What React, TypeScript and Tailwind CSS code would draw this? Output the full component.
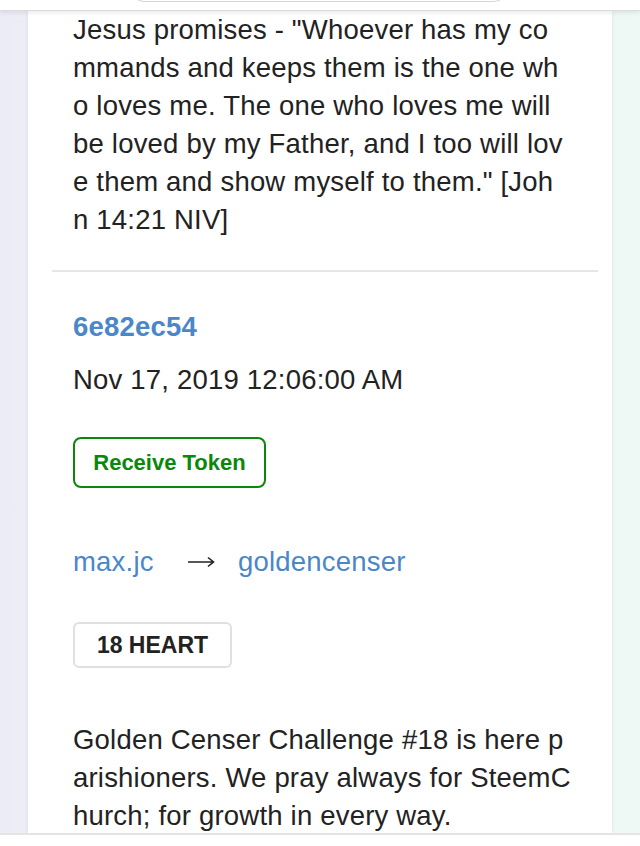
const verse = [
  'Jesus promises - "Whoever has my co',
  "mmands and keeps them is the one wh",
  "o loves me. The one who loves me will",
  "be loved by my Father, and I too will lov",
  'e them and show myself to them." [Joh',
  "n 14:21 NIV]",
];

const note = [
  "Golden Censer Challenge #18 is here p",
  "arishioners. We pray always for SteemC",
  "hurch; for growth in every way.",
];

export default function App() {
  return (
    <div
      className="h-[846px] w-[640px] overflow-hidden flex flex-col bg-white text-[#222]"
      style={{ fontFamily: '"Liberation Sans", Arial, Helvetica, sans-serif' }}
    >
      {/* header strip */}
      <div className="relative h-[11px] shrink-0 bg-white border-b border-[#dcdcdc] shadow-[0_2px_4px_rgba(0,0,0,0.08)] z-10">
        <div className="absolute left-[130px] right-[132px] top-[-20px] h-[22px] rounded-b-[14px] border border-[#d6d6d6] bg-white" />
      </div>

      {/* body */}
      <div className="flex-1 min-h-0 flex bg-gradient-to-r from-[#ececf6] via-[#f1f3f7] to-[#eef8f5]">
        <div className="w-[28px] shrink-0" />
        <div className="flex-1 bg-white shadow-[0_0_4px_rgba(0,0,0,0.08)] overflow-hidden">
          <div className="text-[27.5px] leading-[38px] tracking-[0.2px]">
            <p className="pl-[45px]">
              {verse.map((l) => (
                <span key={l} className="block whitespace-pre">{l}</span>
              ))}
            </p>

            <div className="ml-[24px] mr-[14px] mt-[31px] border-t-2 border-[#e6e6e6]" />

            <div className="pl-[45px] pt-[36px]">
              <div className="font-bold text-[#4a87c9]">6e82ec54</div>
              <div className="mt-[15px]">Nov 17, 2019 12:06:00 AM</div>

              <div className="mt-[38px] flex">
                <span className="h-[51px] w-[193px] flex items-center justify-center rounded-[8px] border-2 border-[#0a880a] text-[22px] font-bold text-[#0a880a] tracking-normal">
                  Receive Token
                </span>
              </div>

              <div className="mt-[55px] flex items-center text-[#4a87c9]">
                <span className="w-[114px]">max.jc</span>
                <svg width="28" height="12" viewBox="0 0 28 12" className="mr-[23px]">
                  <path d="M1 6H26M21 1.5L26.5 6L21 10.5" fill="none" stroke="#222" strokeWidth="1.6" />
                </svg>
                <span>goldencenser</span>
              </div>

              <div className="mt-[41px] flex">
                <span className="h-[46px] w-[159px] flex items-center justify-center rounded-[6px] border-2 border-[#e0e0e0] text-[23px] font-bold tracking-normal">
                  18 HEART
                </span>
              </div>

              <p className="mt-[53px]">
                {note.map((l) => (
                  <span key={l} className="block whitespace-pre">{l}</span>
                ))}
              </p>
            </div>
          </div>
        </div>
        <div className="w-[28px] shrink-0" />
      </div>

      {/* bottom strip */}
      <div className="h-[13px] shrink-0 bg-white border-t-2 border-[#e4e4e4]" />
    </div>
  );
}
